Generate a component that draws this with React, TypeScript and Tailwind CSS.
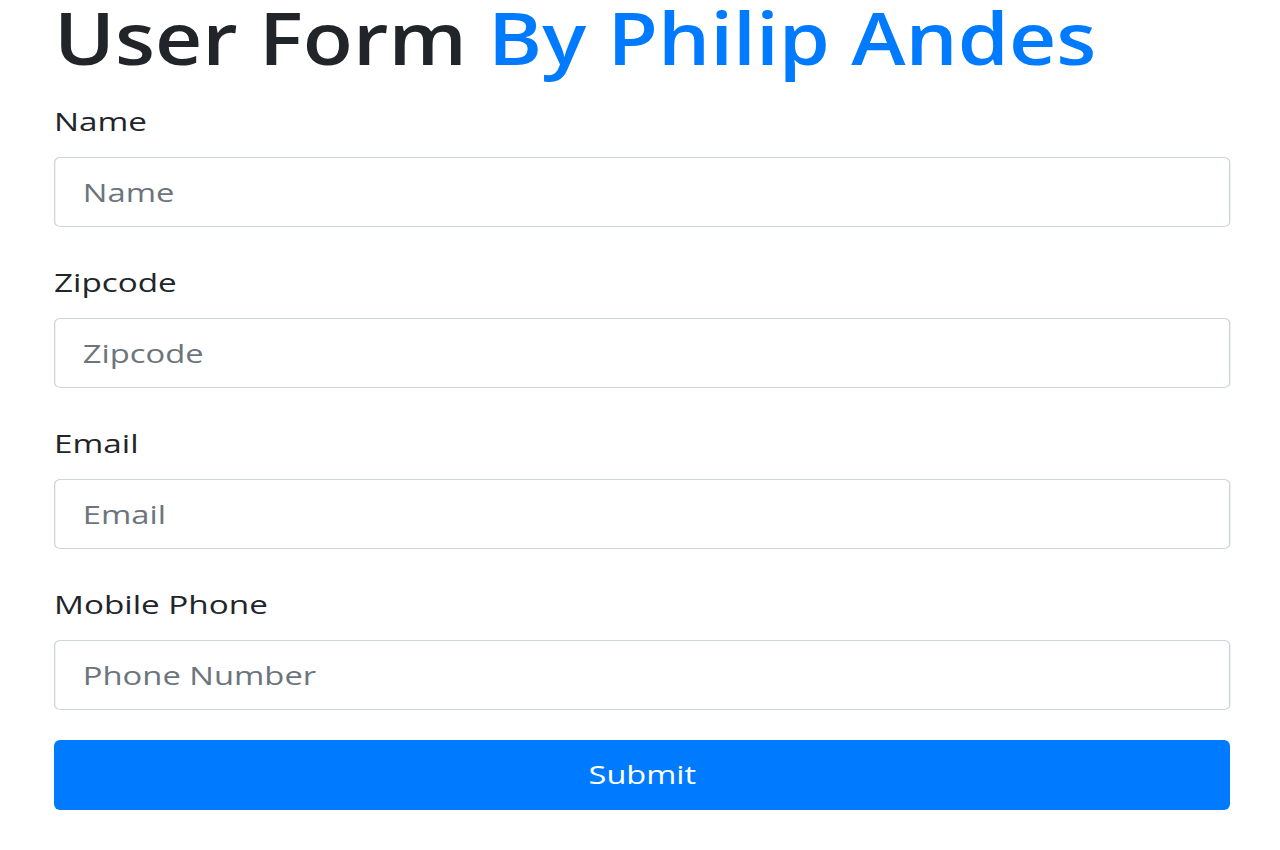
import React from "react";

const fields = [
  { label: "Name", placeholder: "Name" },
  { label: "Zipcode", placeholder: "Zipcode" },
  { label: "Email", placeholder: "Email" },
  { label: "Mobile Phone", placeholder: "Phone Number" },
];

const FONT = '"Open Sans", "Noto Sans", sans-serif';

export default function App() {
  return (
    <div className="min-h-[850px] w-[1280px] bg-white text-[#212529]" style={{ fontFamily: FONT }}>
      <div className="ml-[54px] w-[1176px]">
        <h1 className="h-[74px] text-[73px] font-semibold leading-[74px] whitespace-nowrap">
          <span className="inline-block origin-left scale-x-[1.125]">
            User Form <span className="text-[#007bff]">By Philip Andes</span>
          </span>
        </h1>
        <form className="mt-[28px] flex flex-col">
          {fields.map((f) => (
            <div key={f.label} className="mb-[36px] flex flex-col">
              <label className="mb-[16px] text-[25px] leading-[39px]">
                <span className="inline-block origin-left scale-x-[1.33]">{f.label}</span>
              </label>
              <div className="h-[70px] w-full">
                <input
                  className="h-[70px] w-[897.7px] origin-left scale-x-[1.31] rounded-[5px] border border-[#ced4da] bg-white pl-[21px] pr-[21px] text-[25px] text-[#495057] outline-none placeholder:text-[#6c757d]"
                  placeholder={f.placeholder}
                  style={{ fontFamily: FONT }}
                />
              </div>
            </div>
          ))}
          <button
            type="button"
            className="mt-[-6px] h-[70px] w-full rounded-[6px] bg-[#007bff] text-[25px] text-white"
            style={{ fontFamily: FONT }}
          >
            <span className="inline-block scale-x-[1.3]">Submit</span>
          </button>
        </form>
      </div>
    </div>
  );
}
